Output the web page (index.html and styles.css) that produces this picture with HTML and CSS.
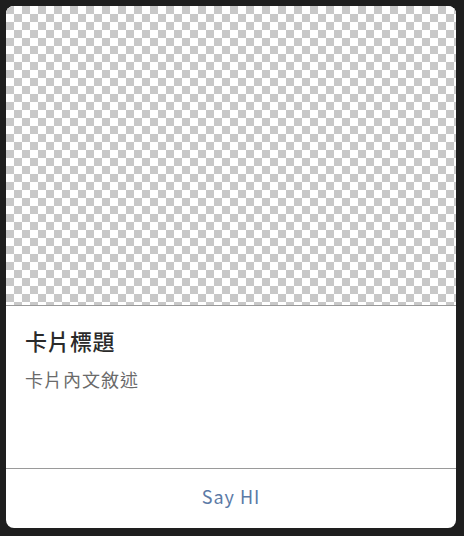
FILE: index.html
```html
<!DOCTYPE html>
<html lang="zh-Hant">
<head>
<meta charset="utf-8">
<link rel="stylesheet" href="styles.css">
</head>
<body>
<div class="card">
  <div class="card-image"></div>
  <div class="card-body">
    <h2 class="card-title">卡片標題</h2>
    <p class="card-text">卡片內文敘述</p>
  </div>
  <div class="card-footer">
    <button class="card-action">Say HI</button>
  </div>
</div>
</body>
</html>
```
FILE: styles.css
```css
html, body {
  margin: 0;
  padding: 0;
  background: #1e1e1e;
}
body {
  padding: 6px 8px 8px 6px;
  font-family: "Noto Sans CJK TC", "Noto Sans", sans-serif;
}
.card {
  width: 450px;
  height: 522px;
  background: #fff;
  border-radius: 8px;
  overflow: hidden;
  display: flex;
  flex-direction: column;
}
.card-image {
  height: 299px;
  border-bottom: 1px solid #9a9a9a;
  background-color: #fff;
  background-image:
    linear-gradient(45deg, #c8c8c8 25%, transparent 25%, transparent 75%, #c8c8c8 75%),
    linear-gradient(45deg, #c8c8c8 25%, transparent 25%, transparent 75%, #c8c8c8 75%);
  background-size: 16px 16px;
  background-position: 8px 0, 0 8px;
}
.card-body {
  flex: 1;
  padding: 18px 19px 20px;
  border-bottom: 1px solid #9a9a9a;
}
.card-title {
  margin: 0;
  font-size: 22px;
  font-weight: 500;
  color: #2a2a2a;
  letter-spacing: 0.5px;
  line-height: 32px;
}
.card-text {
  margin: 9px 0 0;
  font-size: 18px;
  color: #6a6a6a;
  letter-spacing: 1px;
  line-height: 28px;
}
.card-footer {
  height: 59px;
  padding-bottom: 6px;
  box-sizing: border-box;
  display: flex;
  align-items: center;
  justify-content: center;
}
.card-action {
  border: 0;
  background: none;
  font-family: inherit;
  font-size: 18px;
  color: #5b7aa6;
  letter-spacing: 1px;
  padding: 0;
}
```
